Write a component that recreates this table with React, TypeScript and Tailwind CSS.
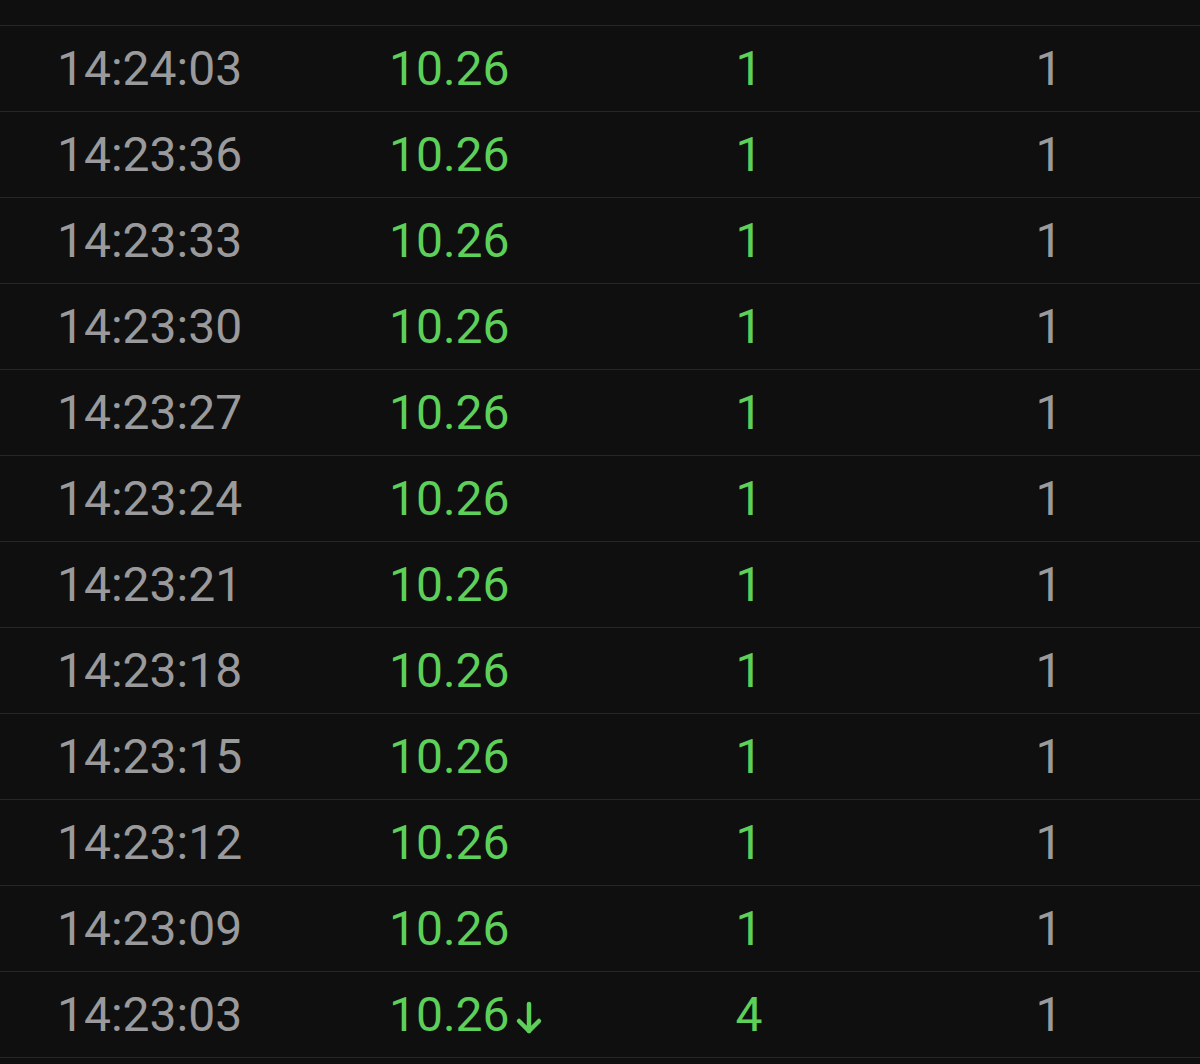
import React from "react";

type Row = { time: string; price: string; qty: string; last: string; down?: boolean };

const rows: Row[] = [
  { time: "14:24:06", price: "10.26", qty: "30", last: "10" },
  { time: "14:24:03", price: "10.26", qty: "1", last: "1" },
  { time: "14:23:36", price: "10.26", qty: "1", last: "1" },
  { time: "14:23:33", price: "10.26", qty: "1", last: "1" },
  { time: "14:23:30", price: "10.26", qty: "1", last: "1" },
  { time: "14:23:27", price: "10.26", qty: "1", last: "1" },
  { time: "14:23:24", price: "10.26", qty: "1", last: "1" },
  { time: "14:23:21", price: "10.26", qty: "1", last: "1" },
  { time: "14:23:18", price: "10.26", qty: "1", last: "1" },
  { time: "14:23:15", price: "10.26", qty: "1", last: "1" },
  { time: "14:23:12", price: "10.26", qty: "1", last: "1" },
  { time: "14:23:09", price: "10.26", qty: "1", last: "1" },
  { time: "14:23:03", price: "10.26", qty: "4", last: "1", down: true },
];

function DownArrow() {
  return (
    <svg width="28" height="34" viewBox="0 0 28 34" className="ml-[5px] mt-[6px]" fill="none">
      <path d="M14 3 L14 30" stroke="#5dd05a" strokeWidth="4.5" strokeLinecap="round" />
      <path d="M4 20 L14 30 L24 20" stroke="#5dd05a" strokeWidth="4.5" strokeLinecap="round" strokeLinejoin="round" />
    </svg>
  );
}

export default function App() {
  return (
    <div
      className="w-[1200px] h-[1064px] overflow-hidden bg-[#0f0f0f]"
      style={{ fontFamily: "Roboto, 'Noto Sans', sans-serif" }}
    >
      <div className="mt-[-60px]">
        {rows.map((r, i) => (
          <div key={i} className="flex items-center h-[86px] border-b border-[#262626] text-[48px] leading-none">
            <div className="w-[389px] pl-[57px] text-[#9a9a9c]">{r.time}</div>
            <div className="w-[253px] flex items-center text-[#5dd05a]">
              <span>{r.price}</span>
              {r.down && <DownArrow />}
            </div>
            <div className="w-[214px] text-center text-[#5dd05a]">{r.qty}</div>
            <div className="flex-1 pl-[42px] text-center text-[#9a9a9c]">{r.last}</div>
          </div>
        ))}
      </div>
    </div>
  );
}
